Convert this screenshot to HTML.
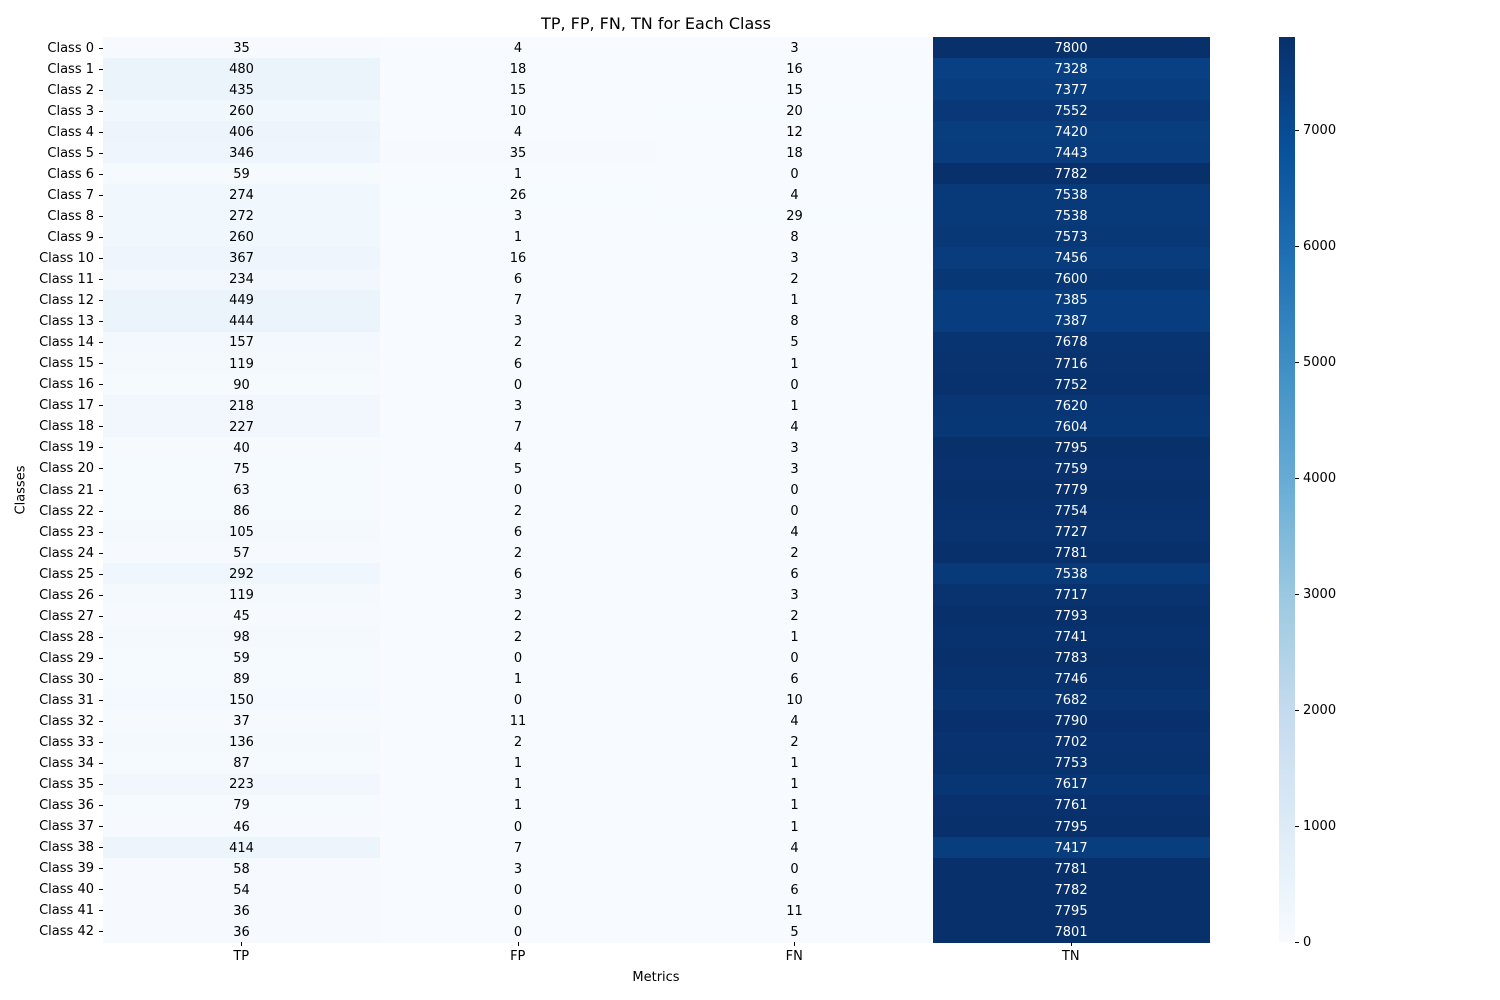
<!DOCTYPE html>
<html><head><meta charset="utf-8"><style>
body{margin:0;width:1500px;height:1000px;background:#fff;position:relative;overflow:hidden;font-family:"DejaVu Sans","Liberation Sans",sans-serif;font-size:13px;color:#000}
.a{position:absolute;white-space:nowrap}
.c{position:absolute;display:flex;align-items:center;justify-content:center;padding-top:1px;box-sizing:border-box}
</style></head><body>
<div class="a" style="left:0;width:1312px;top:14px;text-align:center;font-size:16px">TP, FP, FN, TN for Each Class</div>
<div class="a" style="left:103px;width:1106px;top:970px;text-align:center">Metrics</div>
<div class="a" style="left:21px;top:490px;transform:translate(-50%,-50%) rotate(-90deg)">Classes</div>
<div id="h"></div>
<script>
var d=[[35,4,3,7800],[480,18,16,7328],[435,15,15,7377],[260,10,20,7552],[406,4,12,7420],[346,35,18,7443],[59,1,0,7782],[274,26,4,7538],[272,3,29,7538],[260,1,8,7573],[367,16,3,7456],[234,6,2,7600],[449,7,1,7385],[444,3,8,7387],[157,2,5,7678],[119,6,1,7716],[90,0,0,7752],[218,3,1,7620],[227,7,4,7604],[40,4,3,7795],[75,5,3,7759],[63,0,0,7779],[86,2,0,7754],[105,6,4,7727],[57,2,2,7781],[292,6,6,7538],[119,3,3,7717],[45,2,2,7793],[98,2,1,7741],[59,0,0,7783],[89,1,6,7746],[150,0,10,7682],[37,11,4,7790],[136,2,2,7702],[87,1,1,7753],[223,1,1,7617],[79,1,1,7761],[46,0,1,7795],[414,7,4,7417],[58,3,0,7781],[54,0,6,7782],[36,0,11,7795],[36,0,5,7801]];
var S=[[247,251,255],[222,235,247],[198,219,239],[158,202,225],[107,174,214],[66,146,198],[33,113,181],[8,81,156],[8,48,107]];
function col(t){t=Math.max(0,Math.min(1,t))*8;var i=Math.min(7,Math.floor(t)),f=t-i,a=S[i],b=S[i+1];return [0,1,2].map(function(k){return Math.round(a[k]+(b[k]-a[k])*f)});}
var h='',X0=103,Y0=37,W=276.5,H=905/43,M=7801;
for(var r=0;r<43;r++){var y=Y0+r*H;
h+='<div class="a" style="right:1406px;top:'+(y+H/2-7)+'px">Class '+r+'</div>';
h+='<div class="a" style="left:99px;width:4px;top:'+(y+H/2)+'px;border-top:1px solid #000"></div>';
for(var c=0;c<4;c++){var v=d[r][c],k=col(v/M),L=(0.299*k[0]+0.587*k[1]+0.114*k[2]);
h+='<div class="c" style="left:'+(X0+c*W)+'px;top:'+y+'px;width:'+(W+0.6)+'px;height:'+(H+0.6)+'px;background:rgb('+k+');color:'+(L<140?'#fff':'#000')+'">'+v+'</div>';}}
var n=['TP','FP','FN','TN'];
for(var c=0;c<4;c++){var x=X0+c*W+W/2;h+='<div class="a" style="left:'+x+'px;top:942px;height:4px;border-left:1px solid #000"></div><div class="a" style="left:'+(x-50)+'px;width:100px;text-align:center;top:949px">'+n[c]+'</div>';}
var g='linear-gradient(to top';for(var i=0;i<=8;i++)g+=',rgb('+S[i]+') '+(i*12.5)+'%';g+=')';
h+='<div class="a" style="left:1279px;top:37px;width:16px;height:905px;background:'+g+'"></div>';
for(var t=0;t<=7000;t+=1000){var yy=942-905*t/M;h+='<div class="a" style="left:1295px;width:4px;top:'+yy+'px;border-top:1px solid #000"></div><div class="a" style="left:1303px;top:'+(yy-7)+'px">'+t+'</div>';}
document.getElementById('h').innerHTML=h;
</script>
</body></html>
